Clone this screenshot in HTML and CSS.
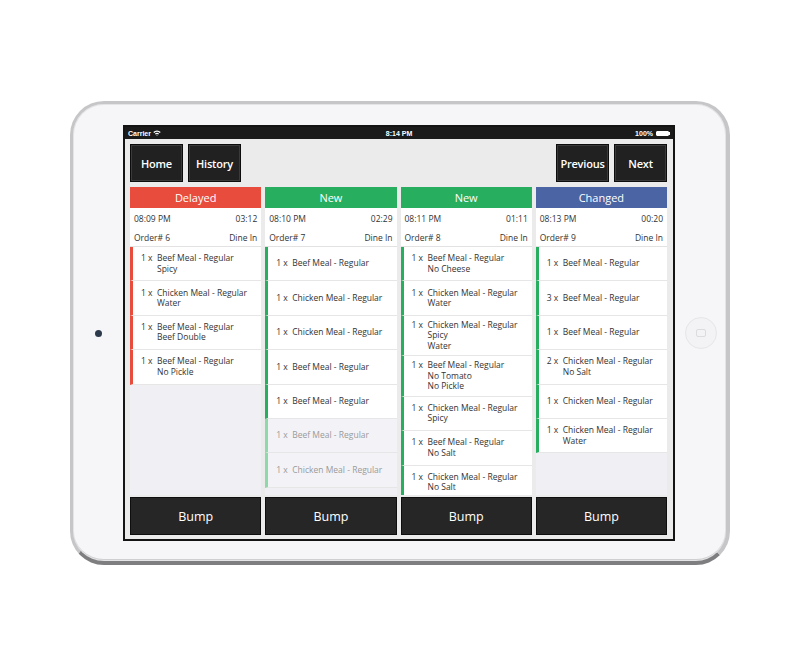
FILE: index.html
```html
<!DOCTYPE html>
<html>
<head>
<meta charset="utf-8">
<link rel="stylesheet" href="styles.css">
</head>
<body>
<div class="stage">
  <div class="ipad">
    <div class="side side-left"><div class="camera"></div></div>
    <div class="screen">
      <div class="statusbar">
        <div class="sb-left">Carrier
          <svg class="wifi" width="8" height="6" viewBox="0 0 8 6"><path d="M0.3 2.1 A5.2 5.2 0 0 1 7.7 2.1 L6.8 3 A4 4 0 0 0 1.2 3 Z M1.9 3.7 A3 3 0 0 1 6.1 3.7 L5.2 4.6 A1.8 1.8 0 0 0 2.8 4.6 Z M3.4 5.3 A0.9 0.9 0 0 1 4.6 5.3 L4 5.9 Z" fill="#fff"/></svg>
        </div>
        <div class="sb-time">8:14 PM</div>
        <div class="sb-right">100%
          <span class="battery"><span class="battery-fill"></span></span><span class="battery-nub"></span>
        </div>
      </div>
      <div class="content">
        <div class="toolbar">
          <div class="btn-group">
            <div class="tbtn">Home</div>
            <div class="tbtn">History</div>
          </div>
          <div class="btn-group">
            <div class="tbtn">Previous</div>
            <div class="tbtn">Next</div>
          </div>
        </div>
        <div class="columns">
          <div class="col">
            <div class="col-head delayed">Delayed</div>
            <div class="info">
              <div class="info-row"><span>08:09 PM</span><span>03:12</span></div>
              <div class="info-row order"><span>Order# 6</span><span>Dine In</span></div>
            </div>
            <div class="item red"><div class="row"><span class="qty">1 x</span><div class="desc"><div>Beef Meal - Regular</div><div>Spicy</div></div></div></div>
            <div class="item red"><div class="row"><span class="qty">1 x</span><div class="desc"><div>Chicken Meal - Regular</div><div>Water</div></div></div></div>
            <div class="item red"><div class="row"><span class="qty">1 x</span><div class="desc"><div>Beef Meal - Regular</div><div>Beef Double</div></div></div></div>
            <div class="item red"><div class="row"><span class="qty">1 x</span><div class="desc"><div>Beef Meal - Regular</div><div>No Pickle</div></div></div></div>
          </div>
          <div class="col">
            <div class="col-head new">New</div>
            <div class="info">
              <div class="info-row"><span>08:10 PM</span><span>02:29</span></div>
              <div class="info-row order"><span>Order# 7</span><span>Dine In</span></div>
            </div>
            <div class="item"><div class="row"><span class="qty">1 x</span><div class="desc"><div>Beef Meal - Regular</div></div></div></div>
            <div class="item"><div class="row"><span class="qty">1 x</span><div class="desc"><div>Chicken Meal - Regular</div></div></div></div>
            <div class="item"><div class="row"><span class="qty">1 x</span><div class="desc"><div>Chicken Meal - Regular</div></div></div></div>
            <div class="item"><div class="row"><span class="qty">1 x</span><div class="desc"><div>Beef Meal - Regular</div></div></div></div>
            <div class="item"><div class="row"><span class="qty">1 x</span><div class="desc"><div>Beef Meal - Regular</div></div></div></div>
            <div class="item done"><div class="row"><span class="qty">1 x</span><div class="desc"><div>Beef Meal - Regular</div></div></div></div>
            <div class="item done"><div class="row"><span class="qty">1 x</span><div class="desc"><div>Chicken Meal - Regular</div></div></div></div>
          </div>
          <div class="col">
            <div class="col-head new">New</div>
            <div class="info">
              <div class="info-row"><span>08:11 PM</span><span>01:11</span></div>
              <div class="info-row order"><span>Order# 8</span><span>Dine In</span></div>
            </div>
            <div class="item"><div class="row"><span class="qty">1 x</span><div class="desc"><div>Beef Meal - Regular</div><div>No Cheese</div></div></div></div>
            <div class="item"><div class="row"><span class="qty">1 x</span><div class="desc"><div>Chicken Meal - Regular</div><div>Water</div></div></div></div>
            <div class="item"><div class="row"><span class="qty">1 x</span><div class="desc"><div>Chicken Meal - Regular</div><div>Spicy</div><div>Water</div></div></div></div>
            <div class="item"><div class="row"><span class="qty">1 x</span><div class="desc"><div>Beef Meal - Regular</div><div>No Tomato</div><div>No Pickle</div></div></div></div>
            <div class="item"><div class="row"><span class="qty">1 x</span><div class="desc"><div>Chicken Meal - Regular</div><div>Spicy</div></div></div></div>
            <div class="item"><div class="row"><span class="qty">1 x</span><div class="desc"><div>Beef Meal - Regular</div><div>No Salt</div></div></div></div>
            <div class="item"><div class="row"><span class="qty">1 x</span><div class="desc"><div>Chicken Meal - Regular</div><div>No Salt</div></div></div></div>
          </div>
          <div class="col">
            <div class="col-head changed">Changed</div>
            <div class="info">
              <div class="info-row"><span>08:13 PM</span><span>00:20</span></div>
              <div class="info-row order"><span>Order# 9</span><span>Dine In</span></div>
            </div>
            <div class="item"><div class="row"><span class="qty">1 x</span><div class="desc"><div>Beef Meal - Regular</div></div></div></div>
            <div class="item"><div class="row"><span class="qty">3 x</span><div class="desc"><div>Beef Meal - Regular</div></div></div></div>
            <div class="item"><div class="row"><span class="qty">1 x</span><div class="desc"><div>Beef Meal - Regular</div></div></div></div>
            <div class="item"><div class="row"><span class="qty">2 x</span><div class="desc"><div>Chicken Meal - Regular</div><div>No Salt</div></div></div></div>
            <div class="item"><div class="row"><span class="qty">1 x</span><div class="desc"><div>Chicken Meal - Regular</div></div></div></div>
            <div class="item"><div class="row"><span class="qty">1 x</span><div class="desc"><div>Chicken Meal - Regular</div><div>Water</div></div></div></div>
          </div>
        </div>
        <div class="bumps">
          <div class="bump">Bump</div>
          <div class="bump">Bump</div>
          <div class="bump">Bump</div>
          <div class="bump">Bump</div>
        </div>
      </div>
    </div>
    <div class="side side-right"><div class="home"><div class="home-sq"></div></div></div>
  </div>
</div>
</body>
</html>
```

FILE: styles.css
```css
html, body {
  margin: 0;
  padding: 0;
  background: #ffffff;
}
body {
  font-family: "Open Sans", "DejaVu Sans", sans-serif;
}
.stage {
  padding: 101px 0 0 70px;
}
.ipad {
  width: 660px;
  height: 464px;
  box-sizing: border-box;
  display: flex;
  align-items: stretch;
  padding: 21px 0 20px 0;
  background: #f6f6f8;
  border-style: solid;
  border-color: #c6c6c8;
  border-width: 3px 4px 4px 3px;
  border-bottom-color: #7e7e80;
  border-radius: 34px;
  box-shadow: inset 0 0 0 1px #e4e4e6, inset 0 -2px 0 #cfcfd1;
}
.side {
  display: flex;
  align-items: center;
  justify-content: center;
}
.side-left { width: 50px; }
.side-right { width: 51px; }
.camera {
  width: 7px;
  height: 7px;
  border-radius: 50%;
  background: #2d3a4c;
}
.home {
  width: 32px;
  height: 32px;
  box-sizing: border-box;
  border-radius: 50%;
  border: 1px solid #e6e6e8;
  background: #f3f3f5;
  display: flex;
  align-items: center;
  justify-content: center;
}
.home-sq {
  width: 10px;
  height: 8px;
  box-sizing: border-box;
  border: 1px solid #dcdcde;
  border-radius: 2px;
}
.screen {
  width: 552px;
  box-sizing: border-box;
  border: 2px solid #141414;
  display: flex;
  flex-direction: column;
  background: #1b1b1b;
}
.statusbar {
  height: 12px;
  display: grid;
  grid-template-columns: 1fr auto 1fr;
  align-items: center;
  padding: 0 3px 0 3px;
  color: #fff;
  font-family: "Liberation Sans", Arial, sans-serif;
  font-size: 7px;
  font-weight: bold;
}
.sb-left {
  display: flex;
  align-items: center;
  gap: 2px;
}
.sb-time { text-align: center; }
.sb-right {
  display: flex;
  align-items: center;
  justify-content: flex-end;
  gap: 2px;
}
.battery {
  width: 13px;
  height: 5px;
  box-sizing: border-box;
  border: 1px solid #fff;
  border-radius: 1px;
  display: flex;
  margin-left: 1px;
}
.battery-fill {
  flex: 1;
  background: #fff;
}
.battery-nub {
  width: 1px;
  height: 3px;
  background: #fff;
  margin-left: -2px;
}
.content {
  flex: 1;
  display: flex;
  flex-direction: column;
  padding: 5px 6px 4px 5px;
  background: #ebebeb;
}
.toolbar {
  height: 38px;
  display: flex;
  justify-content: space-between;
}
.btn-group {
  display: flex;
  gap: 5px;
}
.tbtn {
  width: 53px;
  box-sizing: border-box;
  background: #212121;
  border: 1px solid #0c0c0c;
  box-shadow: inset 0 0 0 1px #3a3a3a;
  color: #fff;
  font-size: 11px;
  font-weight: 600;
  display: flex;
  align-items: center;
  justify-content: center;
  letter-spacing: -0.2px;
}
.columns {
  margin-top: 5px;
  height: 308px;
  display: grid;
  grid-template-columns: repeat(4, 1fr);
  gap: 4px;
}
.col {
  background: #efeff4;
  overflow: hidden;
  display: flex;
  flex-direction: column;
}
.col-head {
  height: 21px;
  flex: none;
  line-height: 21px;
  text-align: center;
  color: #fff;
  font-size: 11px;
}
.delayed { background: #e84c3d; }
.new { background: #28ae5f; }
.changed { background: #4b64a3; }
.info {
  background: #fff;
  border-bottom: 1px solid #e2e2e2;
  flex: none;
}
.info-row {
  height: 20px;
  display: flex;
  justify-content: space-between;
  align-items: center;
  padding: 0 4px 0 4px;
  font-size: 8.5px;
  color: #333;
}
.info-row.order { height: 18px; }
.item {
  flex: none;
  min-height: 34.4px;
  box-sizing: border-box;
  display: flex;
  align-items: center;
  background: #fff;
  border-left: 3px solid #28ae5f;
  border-bottom: 1px solid #e6e6e6;
  padding: 4px 3px 4px 8px;
  font-size: 8.5px;
  line-height: 10.5px;
  color: #333;
}
.item.red { border-left-color: #e84c3d; }
.item.done {
  background: #f3f3f7;
  border-left-color: #8fd8aa;
  color: #9a9a9a;
}
.row {
  display: flex;
  align-items: flex-start;
}
.qty {
  width: 16px;
  flex: none;
}
.bumps {
  margin-top: 2px;
  height: 38px;
  display: grid;
  grid-template-columns: repeat(4, 1fr);
  gap: 4px;
}
.bump {
  background: #262626;
  border: 1px solid #0e0e0e;
  box-sizing: border-box;
  color: #fff;
  font-size: 12.5px;
  display: flex;
  align-items: center;
  justify-content: center;
}
```
